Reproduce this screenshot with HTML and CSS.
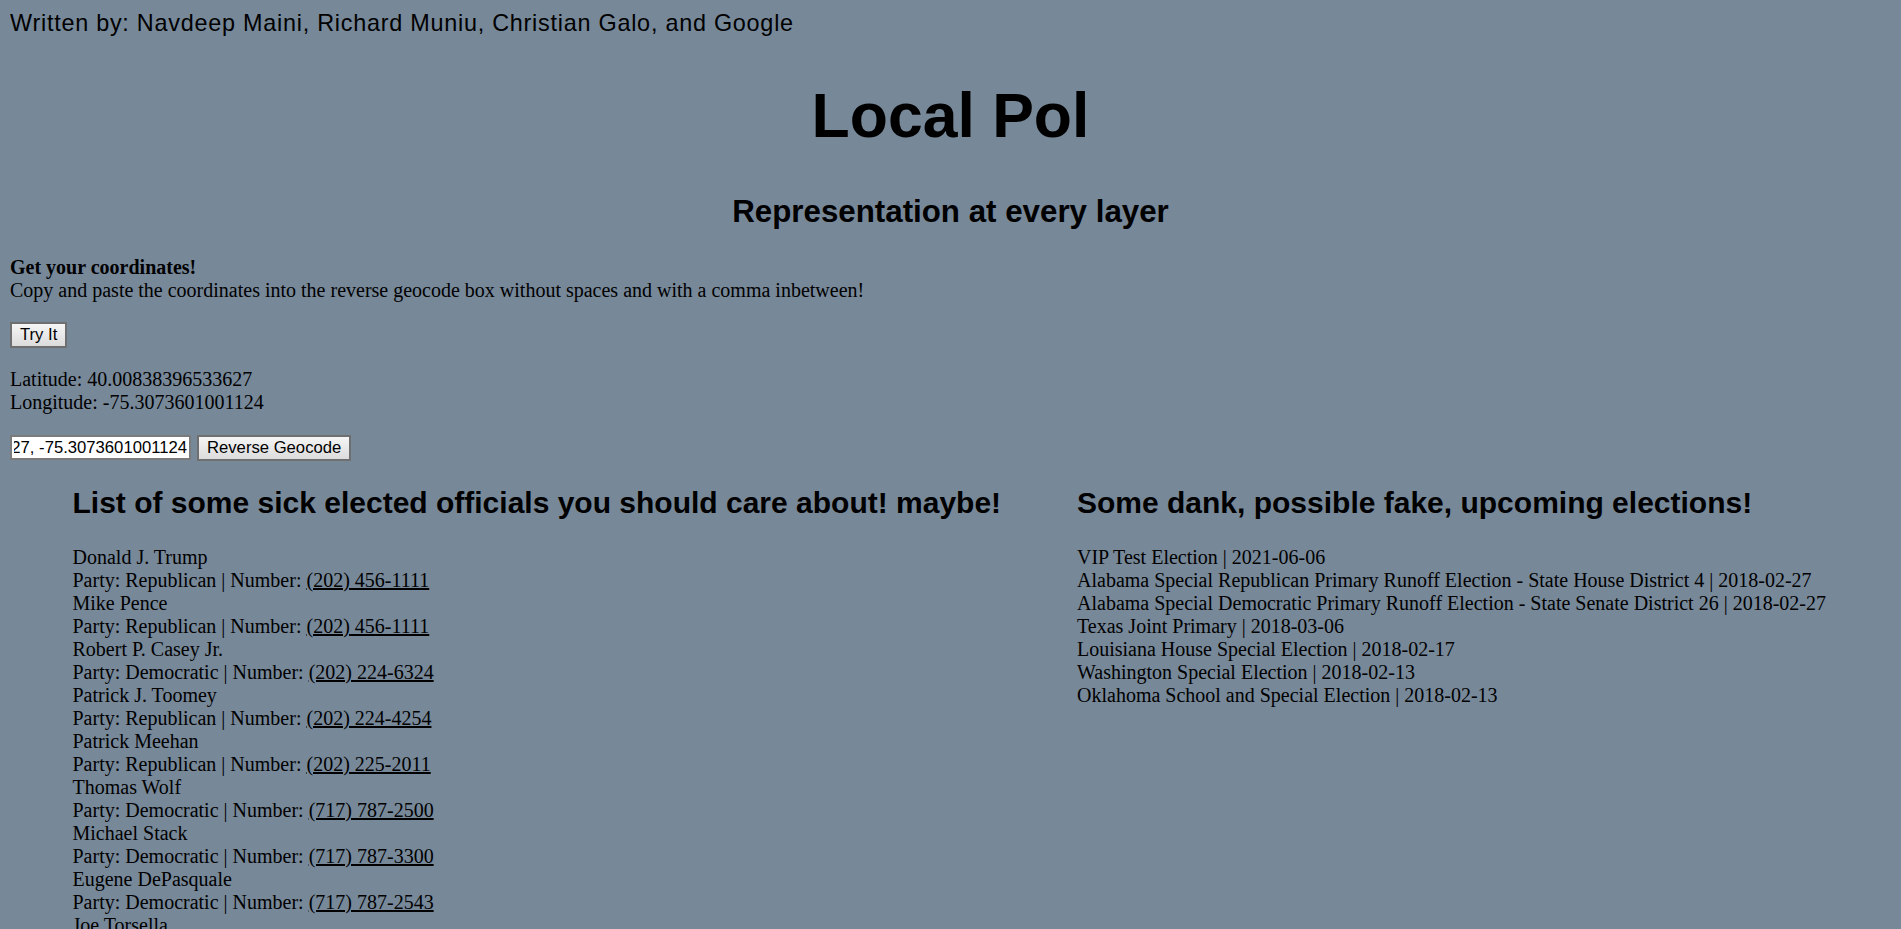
FILE: index.html
```html
<!DOCTYPE html>
<html lang="en">
<head>
<meta charset="utf-8">
<title>Local Pol</title>
<link rel="stylesheet" href="styles.css">
</head>
<body>
<div class="byline">Written by: Navdeep Maini, Richard Muniu, Christian Galo, and Google</div>
<h1 class="title">Local Pol</h1>
<h2 class="subtitle">Representation at every layer</h2>
<p class="intro"><b>Get your coordinates!</b><br>Copy and paste the coordinates into the reverse geocode box without spaces and with a comma inbetween!</p>
<div class="try"><button class="btn" type="button">Try It</button></div>
<p class="position">Latitude: 40.00838396533627<br>Longitude: -75.3073601001124</p>
<div class="geocode">
  <input class="coords" type="text" value="40.00838396533627, -75.3073601001124">
  <button class="btn" type="button">Reverse Geocode</button>
</div>
<div class="columns">
  <section class="col col-left">
    <h2 class="col-title">List of some sick elected officials you should care about! maybe!</h2>
    <div class="list">
      <div>Donald J. Trump</div>
      <div>Party: Republican | Number: <a href="#">(202) 456-1111</a></div>
      <div>Mike Pence</div>
      <div>Party: Republican | Number: <a href="#">(202) 456-1111</a></div>
      <div>Robert P. Casey Jr.</div>
      <div>Party: Democratic | Number: <a href="#">(202) 224-6324</a></div>
      <div>Patrick J. Toomey</div>
      <div>Party: Republican | Number: <a href="#">(202) 224-4254</a></div>
      <div>Patrick Meehan</div>
      <div>Party: Republican | Number: <a href="#">(202) 225-2011</a></div>
      <div>Thomas Wolf</div>
      <div>Party: Democratic | Number: <a href="#">(717) 787-2500</a></div>
      <div>Michael Stack</div>
      <div>Party: Democratic | Number: <a href="#">(717) 787-3300</a></div>
      <div>Eugene DePasquale</div>
      <div>Party: Democratic | Number: <a href="#">(717) 787-2543</a></div>
      <div>Joe Torsella</div>
      <div>Party: Democratic | Number: <a href="#">(717) 787-2465</a></div>
    </div>
  </section>
  <section class="col col-right">
    <h2 class="col-title">Some dank, possible fake, upcoming elections!</h2>
    <div class="list">
      <div>VIP Test Election | 2021-06-06</div>
      <div>Alabama Special Republican Primary Runoff Election - State House District 4 | 2018-02-27</div>
      <div>Alabama Special Democratic Primary Runoff Election - State Senate District 26 | 2018-02-27</div>
      <div>Texas Joint Primary | 2018-03-06</div>
      <div>Louisiana House Special Election | 2018-02-17</div>
      <div>Washington Special Election | 2018-02-13</div>
      <div>Oklahoma School and Special Election | 2018-02-13</div>
    </div>
  </section>
</div>
<script src="script.js"></script>
</body>
</html>
```

FILE: styles.css
```css
html {
  overflow: hidden;
}

body {
  margin: 10px;
  background: #778899;
  color: #000;
  font-family: "Liberation Serif", "Times New Roman", serif;
  font-size: 20px;
  line-height: 23px;
}

.byline {
  font-family: "Liberation Sans", Arial, sans-serif;
  font-size: 23.4px;
  line-height: 27px;
  letter-spacing: 0.75px;
}

.title {
  margin: 41px 0 0;
  font-family: "Liberation Sans", Arial, sans-serif;
  font-size: 62.5px;
  line-height: 74px;
  font-weight: bold;
  text-align: center;
}

.subtitle {
  margin: 42.5px 0 0;
  font-family: "Liberation Sans", Arial, sans-serif;
  font-size: 31.3px;
  line-height: 34.5px;
  font-weight: bold;
  text-align: center;
}

.intro {
  margin: 27.25px 0 0;
}

.try {
  margin-top: 19.5px;
  display: flex;
}

.position {
  margin: 20.5px 0 0;
}

.geocode {
  margin-top: 20.25px;
  display: flex;
  align-items: center;
  gap: 6px;
}

.btn {
  font-family: "Liberation Sans", Arial, sans-serif;
  font-size: 16.67px;
  line-height: 19px;
  color: #000;
  padding: 1.5px 8px;
  border: 2px solid #6f6f6f;
  border-radius: 0;
  background: linear-gradient(#f5f5f5, #dcdcdc);
  margin: 0;
}

.coords {
  box-sizing: border-box;
  width: 181px;
  height: 25.5px;
  margin: 0;
  padding: 1px 2px;
  border: 2px solid #7b7b7b;
  background: #fff;
  color: #000;
  font-family: "Liberation Sans", Arial, sans-serif;
  font-size: 16.67px;
  outline: none;
}

.columns {
  display: flex;
  padding-left: 62.5px;
}

.col-left {
  width: 1004.5px;
  flex: none;
}

.col-right {
  flex: 1;
}

.col-title {
  margin: 25.7px 0 0;
  font-family: "Liberation Sans", Arial, sans-serif;
  font-size: 30px;
  line-height: 34.5px;
  font-weight: bold;
}

.list {
  margin-top: 25.5px;
}

.list a {
  color: #000;
  text-decoration: underline;
}
```

FILE: script.js
```js
var coords = document.querySelector('.coords');
coords.scrollLeft = coords.scrollWidth;
window.addEventListener('load', function () {
  coords.scrollLeft = coords.scrollWidth;
});
```
